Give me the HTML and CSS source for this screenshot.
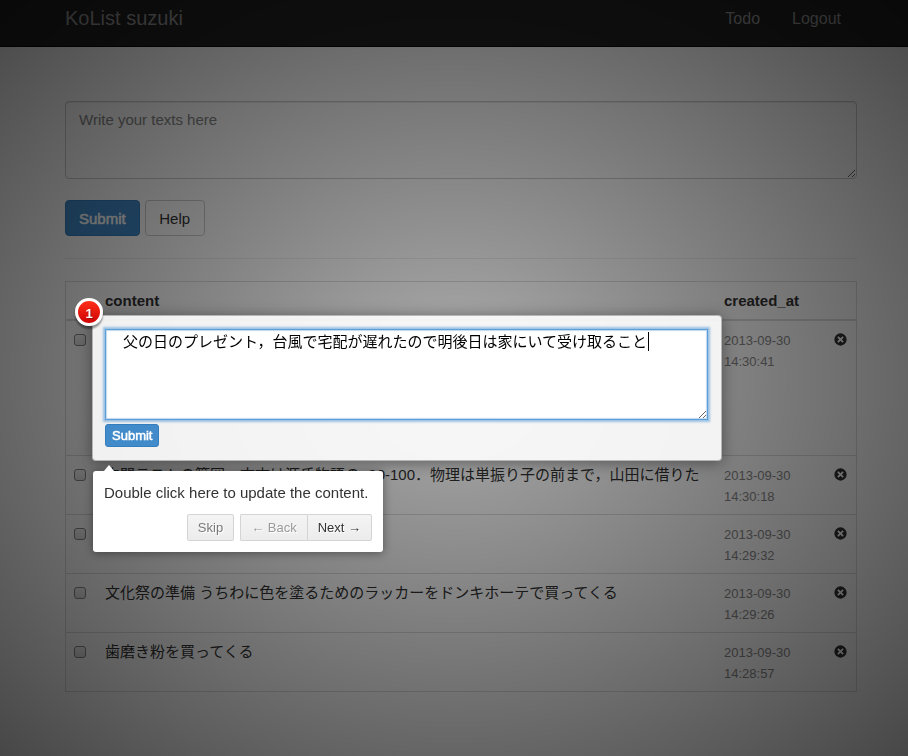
FILE: index.html
```html
<!DOCTYPE html>
<html lang="ja">
<head>
<meta charset="utf-8">
<title>KoList</title>
<link rel="stylesheet" href="styles.css">
</head>
<body>
<svg class="sprite" aria-hidden="true">
  <symbol id="remove" viewBox="0 0 14 14">
    <path fill-rule="evenodd" d="M7 .4a6.6 6.6 0 1 0 0 13.2A6.6 6.6 0 0 0 7 .4zM4.9 3.500 7 5.600l2.100-2.100 1.400 1.400L8.400 7l2.100 2.100-1.400 1.400L7 8.400l-2.100 2.100-1.400-1.400L5.600 7 3.500 4.900z"/>
  </symbol>
</svg>

<nav class="navbar">
  <a class="brand" href="#">KoList suzuki</a>
  <div class="nav-links">
    <a href="#">Todo</a>
    <a href="#">Logout</a>
  </div>
</nav>

<main class="container">
  <form class="new-item">
    <textarea class="form-control" rows="3" placeholder="Write your texts here" aria-label="New item"></textarea>
    <div class="actions">
      <button type="submit" class="btn btn-primary">Submit</button>
      <button type="button" class="btn btn-default">Help</button>
    </div>
  </form>
  <hr>
  <table class="items">
    <thead>
      <tr><th class="col-check"></th><th>content</th><th class="col-date">created_at</th><th class="col-remove"></th></tr>
    </thead>
    <tbody>
      <tr>
        <td><input type="checkbox" aria-label="Select item 1"></td>
        <td class="tour-target">
          <span class="step-number">1</span>
          <form class="edit">
            <div class="edit-field">
              <textarea class="edit-text" aria-label="Content">父の日のプレゼント，台風で宅配が遅れたので明後日は家にいて受け取ること</textarea>
              <span class="caret"></span>
            </div>
            <button type="submit" class="btn btn-primary btn-small">Submit</button>
          </form>
          <div class="tooltip" role="dialog" aria-label="Tour">
            <p>Double click here to update the content.</p>
            <div class="tour-buttons">
              <button type="button" class="tour-btn skip">Skip</button>
              <div class="tour-group">
                <button type="button" class="tour-btn" disabled>← Back</button>
                <button type="button" class="tour-btn">Next →</button>
              </div>
            </div>
          </div>
        </td>
        <td class="date">2013-09-30 14:30:41</td>
        <td><button type="button" class="remove" aria-label="Remove"><svg><use href="#remove"/></svg></button></td>
      </tr>
      <tr>
        <td><input type="checkbox" aria-label="Select item 2"></td>
        <td>中間テストの範囲，古文は源氏物語のp80-100．物理は単振り子の前まで，山田に借りた</td>
        <td class="date">2013-09-30 14:30:18</td>
        <td><button type="button" class="remove" aria-label="Remove"><svg><use href="#remove"/></svg></button></td>
      </tr>
      <tr>
        <td><input type="checkbox" aria-label="Select item 3"></td>
        <td></td>
        <td class="date">2013-09-30 14:29:32</td>
        <td><button type="button" class="remove" aria-label="Remove"><svg><use href="#remove"/></svg></button></td>
      </tr>
      <tr>
        <td><input type="checkbox" aria-label="Select item 4"></td>
        <td>文化祭の準備 うちわに色を塗るためのラッカーをドンキホーテで買ってくる</td>
        <td class="date">2013-09-30 14:29:26</td>
        <td><button type="button" class="remove" aria-label="Remove"><svg><use href="#remove"/></svg></button></td>
      </tr>
      <tr>
        <td><input type="checkbox" aria-label="Select item 5"></td>
        <td>歯磨き粉を買ってくる</td>
        <td class="date">2013-09-30 14:28:57</td>
        <td><button type="button" class="remove" aria-label="Remove"><svg><use href="#remove"/></svg></button></td>
      </tr>
    </tbody>
  </table>
</main>
<div class="overlay"></div>
</body>
</html>
```
FILE: styles.css
```css
* {
  box-sizing: border-box;
}

body {
  margin: 0;
  font-family: "Liberation Sans", "Noto Sans CJK JP", sans-serif;
  font-size: 15px;
  line-height: 21px;
  color: #333;
  background: #fff;
}

button,
textarea {
  font: inherit;
}

.sprite {
  display: none;
}

/* Page header */
.navbar {
  display: flex;
  justify-content: space-between;
  align-items: center;
  height: 47px;
  padding: 0 67px 9px 65px;
  background: #222;
  border-bottom: 1px solid #080808;
}

.navbar a {
  color: #999;
  text-decoration: none;
}

.navbar .brand {
  font-size: 20px;
}

.nav-links {
  display: flex;
  gap: 32px;
  font-size: 16px;
}

.container {
  padding: 54px 51px 0 65px;
}

/* Entry form */
.form-control {
  display: block;
  width: 100%;
  padding: 7px 13px 6px;
  color: #555;
  background: #fff;
  border: 1px solid #ccc;
  border-radius: 4px;
  box-shadow: inset 0 1px 1px rgba(0, 0, 0, 0.075);
  resize: vertical;
}

.form-control::placeholder {
  color: #888;
}

.actions {
  display: flex;
  gap: 5px;
  margin-top: 21px;
}

.btn {
  padding: 7px 13px 6px;
  border: 1px solid #ccc;
  border-radius: 4px;
  background: #fff;
  color: #333;
}

.btn-default {
  min-width: 60px;
}

.btn-primary {
  color: #fff;
  background: #428bca;
  border-color: #357ebd;
  -webkit-text-stroke: 0.5px;
}

.btn-small {
  display: block;
  padding: 1px 6px;
  font-size: 13px;
  line-height: 19px;
  border-radius: 3px;
}

hr {
  margin: 22px 0;
  border: 0;
  border-top: 1px solid #eee;
}

/* Item list */
.items {
  width: 100%;
  table-layout: fixed;
  border-collapse: separate;
  border-spacing: 0;
  border: 1px solid #ddd;
  border-bottom: 0;
}

th,
td {
  padding: 8px;
  text-align: left;
  vertical-align: top;
  border-bottom: 1px solid #ddd;
}

th {
  border-bottom-width: 2px;
}

.col-check {
  width: 31px;
}

.col-date {
  width: 110px;
}

.col-remove {
  width: 30px;
}

td.date {
  padding-top: 9px;
  padding-bottom: 7px;
  font-size: 13px;
  color: #888;
}

input[type="checkbox"] {
  appearance: none;
  display: block;
  width: 12px;
  height: 12px;
  margin: 5px 0 0;
  border: 1px solid #888;
  border-radius: 3px;
  background: linear-gradient(#f4f4f4, #dedede);
}

.remove {
  display: block;
  padding: 4px 0 0;
  border: 0;
  background: none;
}

.remove svg {
  display: block;
  width: 13px;
  height: 13px;
  fill: #333;
}

/* Guided tour */
.overlay {
  position: fixed;
  inset: 0;
  z-index: 10;
  opacity: 0.8;
  background: radial-gradient(ellipse farthest-corner, rgba(0, 0, 0, 0.4) 0, rgba(0, 0, 0, 0.9) 100%);
}

.tour-target {
  position: relative;
  z-index: 20;
  border-bottom-color: transparent;
}

.tour-target::before {
  content: "";
  position: absolute;
  inset: -6px -6px -6px -5px;
  z-index: -1;
  background: rgba(255, 255, 255, 0.9);
  border: 1px solid rgba(119, 119, 119, 0.5);
  border-radius: 4px;
  box-shadow: 0 2px 15px rgba(0, 0, 0, 0.4);
}

.step-number {
  position: absolute;
  top: -23px;
  left: -22px;
  width: 28px;
  height: 28px;
  border: 3px solid #fff;
  border-radius: 50%;
  background: linear-gradient(#ff3019, #cf0404);
  box-shadow: 0 3px 2px rgba(0, 0, 0, 0.4);
  color: #fff;
  font-size: 13px;
  font-weight: bold;
  line-height: 25px;
  text-align: center;
  text-shadow: 1px 1px 1px rgba(0, 0, 0, 0.3);
}

.edit-field {
  position: relative;
  margin-bottom: 4px;
}

.edit-text {
  display: block;
  width: 100%;
  height: 91px;
  padding: 1px 17px;
  color: #000;
  background: #fff;
  border: 1px solid #5e9ed6;
  outline: 0;
  box-shadow: 0 0 2px 2px rgba(94, 158, 214, 0.6), inset 0 0 1px 1px rgba(94, 158, 214, 0.4);
}

.caret {
  position: absolute;
  top: 3px;
  left: 543px;
  width: 1px;
  height: 19px;
  background: #000;
}

.tooltip {
  position: absolute;
  top: calc(100% + 16px);
  left: -4px;
  width: max-content;
  min-width: 290px;
  padding: 11px;
  background: #fff;
  border-radius: 3px;
  box-shadow: 0 1px 10px rgba(0, 0, 0, 0.4);
}

.tooltip::before {
  content: "";
  position: absolute;
  top: -6px;
  left: 11px;
  border: 5px solid transparent;
  border-top: 0;
  border-bottom: 6px solid #fff;
}

.tooltip p {
  margin: 0 0 11px;
}

.tour-buttons {
  display: flex;
  justify-content: flex-end;
  gap: 6px;
}

.tour-group {
  display: flex;
}

.tour-btn {
  padding: 3px 10px;
  font-size: 13px;
  line-height: 19px;
  color: #333;
  background: linear-gradient(#f4f4f4, #ececec);
  border: 1px solid #d4d4d4;
  border-radius: 2px;
  text-shadow: 1px 1px 0 #fff;
}

.tour-btn:disabled {
  color: #9a9a9a;
}

.tour-group .tour-btn:first-child {
  border-right: 0;
  border-radius: 2px 0 0 2px;
}

.tour-group .tour-btn:last-child {
  border-radius: 0 2px 2px 0;
}

.skip {
  color: #7a7a7a;
}
```
